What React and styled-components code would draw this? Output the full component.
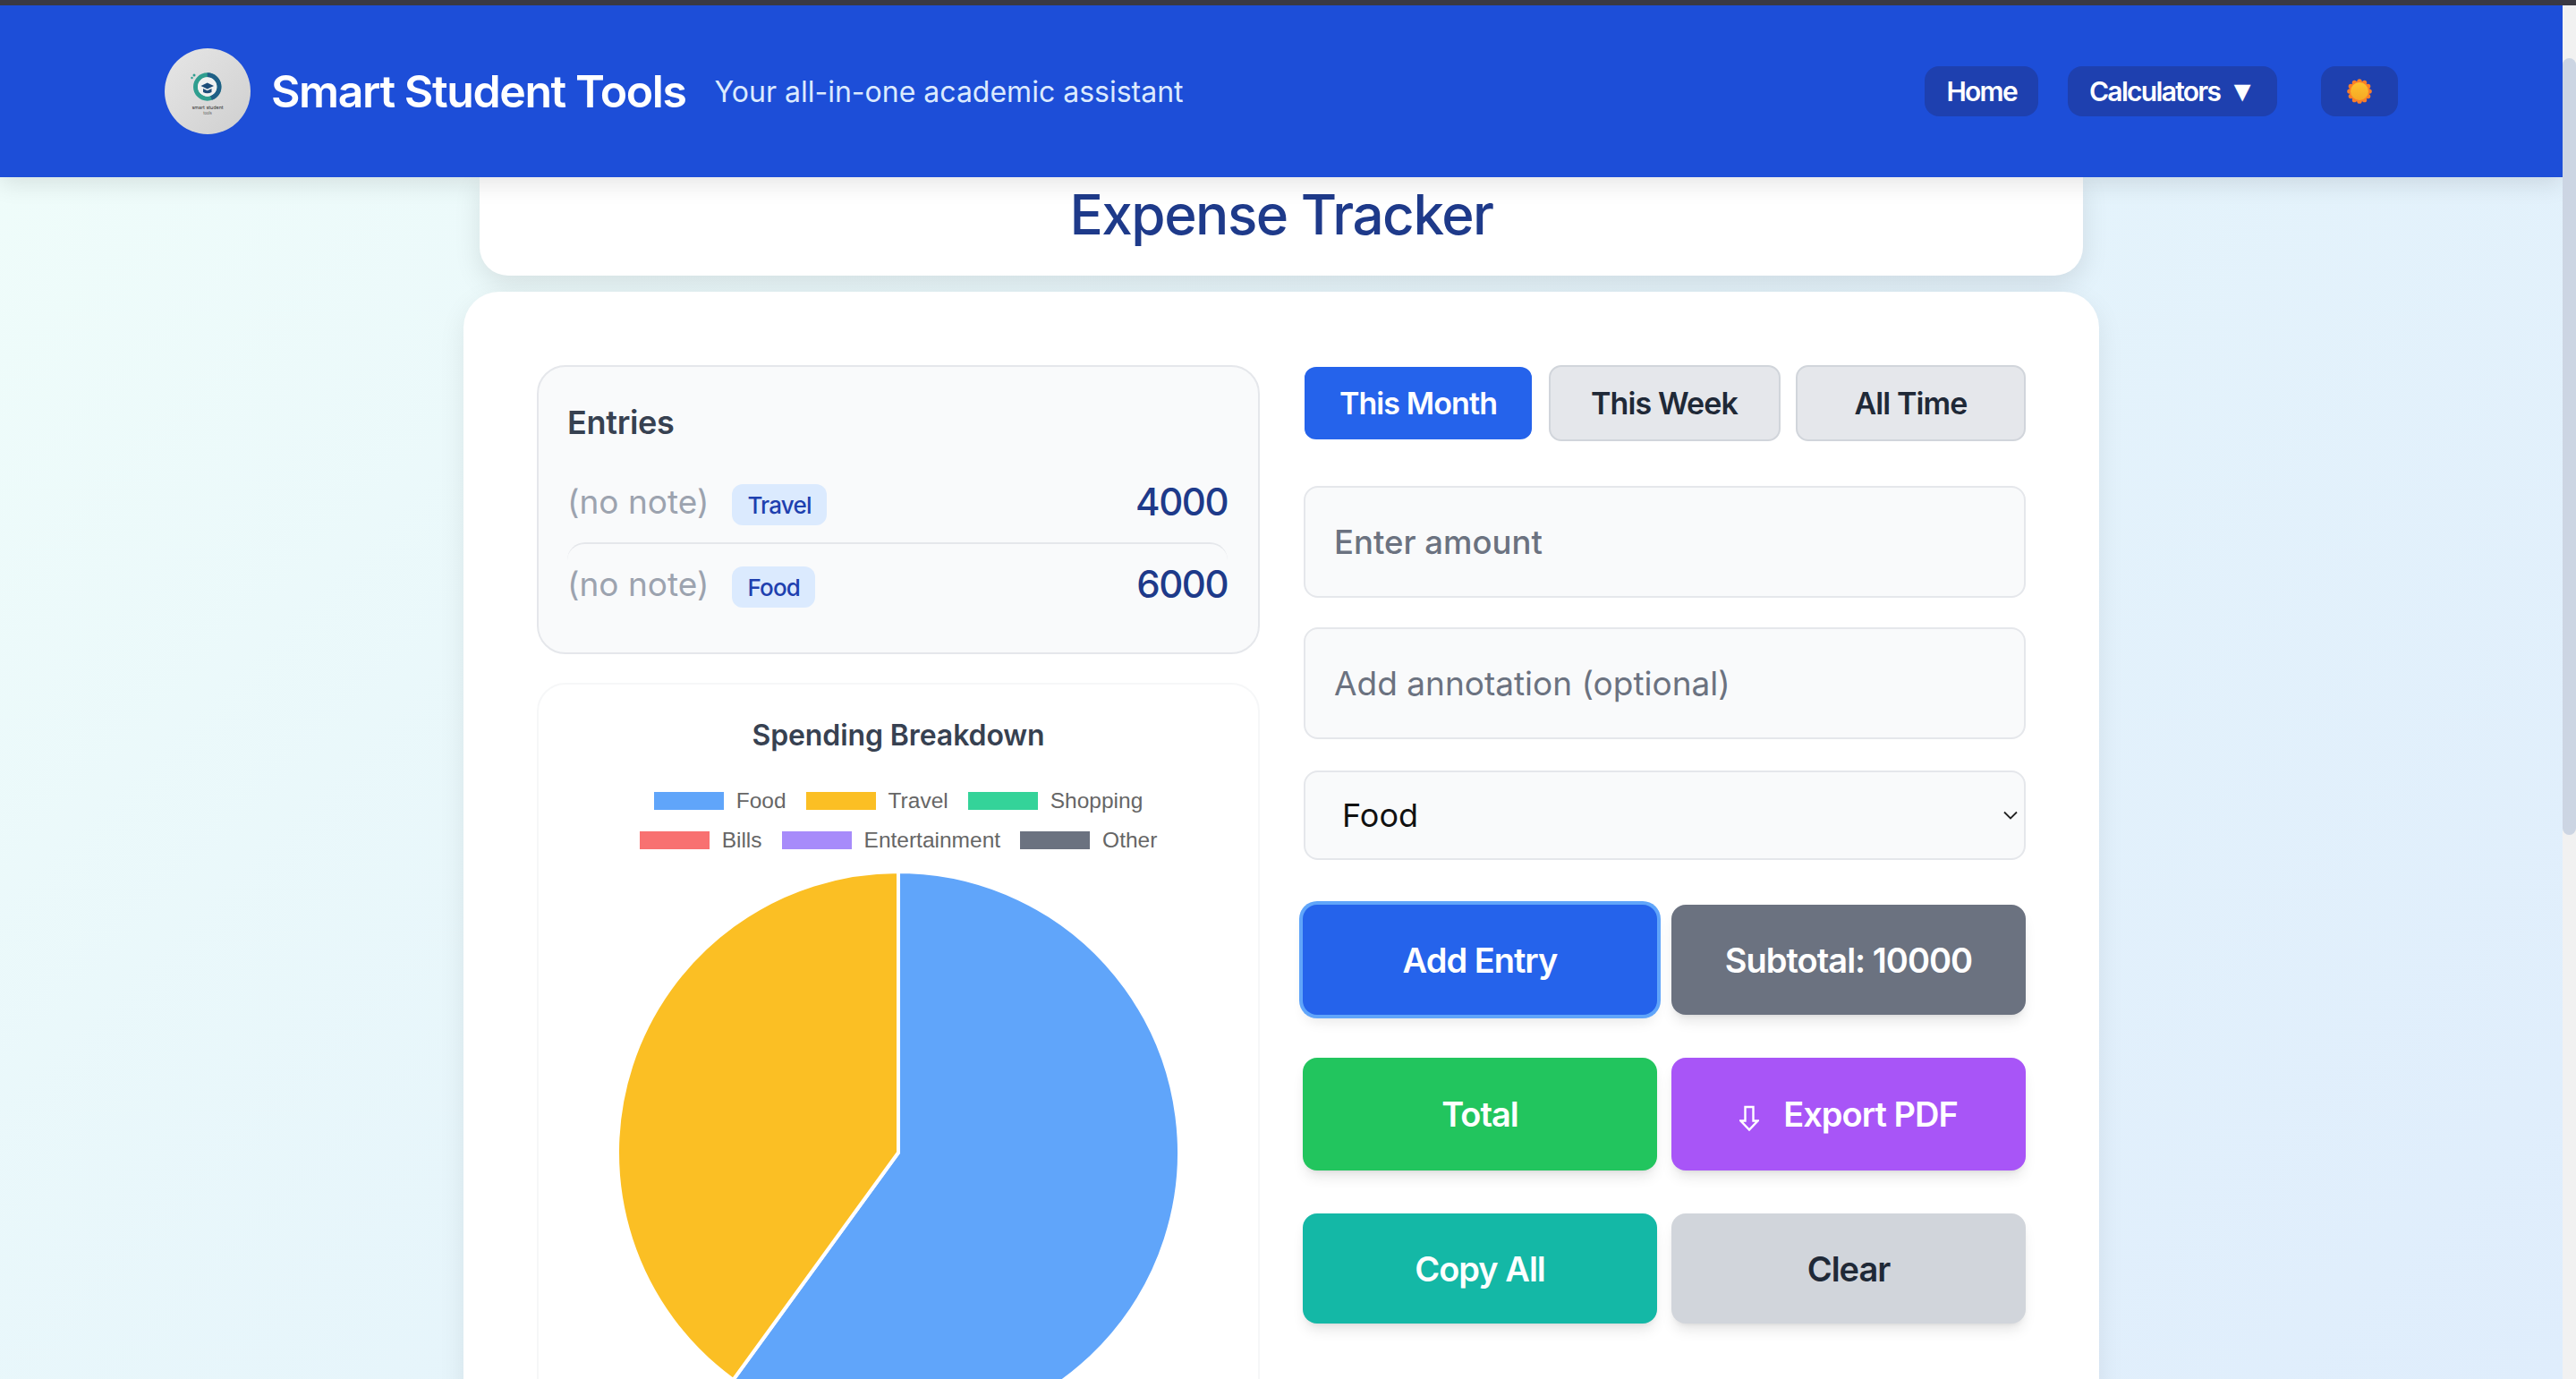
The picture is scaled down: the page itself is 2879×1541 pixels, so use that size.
import React from 'react';
import styled, { createGlobalStyle } from 'styled-components';

const Global = createGlobalStyle`
  html, body { margin: 0; padding: 0; height: 100%; overflow: hidden; }
  body { font-family: Inter, "Noto Sans", sans-serif; }
  * { box-sizing: border-box; }
`;

const Page = styled.div`
  width: 2879px; height: 1541px; display: flex; flex-direction: column; overflow: hidden;
`;
const TopStrip = styled.div`
  height: 6px; flex: none; background: #3a3942;
`;
const Frame = styled.div`
  flex: 1; min-height: 0; display: flex;
`;
const Viewport = styled.div`
  flex: 1; min-width: 0; display: flex; flex-direction: column; overflow: hidden;
  background: linear-gradient(135deg, #f0fdfa 0%, #e5f4fb 50%, #dfedfc 100%);
`;
const ScrollTrack = styled.div`
  width: 15px; flex: none; background: #f1f1f1; padding-top: 59px;
`;
const ScrollThumb = styled.div`
  height: 868px; background: #ccd5e3; border-radius: 8px;
`;
const Header = styled.header`
  position: relative; z-index: 2; flex: none; height: 192px; padding: 0 184px;
  background: #1d4ed8; display: flex; align-items: center; justify-content: space-between;
  box-shadow: 0 8px 24px rgba(0,0,0,.1);
`;
const Brand = styled.div`display: flex; align-items: center;`;
const LogoDisc = styled.div`
  width: 96px; height: 96px; border-radius: 50%; flex: none; margin-right: 23px;
  background: linear-gradient(135deg, #e6e6e6, #cfcfcf);
  display: flex; align-items: center; justify-content: center;
`;
const BrandTitle = styled.h1`
  margin: 0 32px 0 0; font-size: 50px; font-weight: 600; color: #fff; letter-spacing: -1.4px; white-space: nowrap;
`;
const Tagline = styled.span`
  font-size: 32px; font-weight: 400; color: #dbeafe; white-space: nowrap;
`;
const Nav = styled.nav`display: flex; align-items: center;`;
const NavButton = styled.button`
  height: 56px; padding: 0 ${p => p.$pad || 24}px; margin-left: ${p => p.$gap || 0}px; border: 0; border-radius: 16px;
  background: #1e40af; color: #fff; font: 600 30px Inter, sans-serif; letter-spacing: -1.7px;
  display: flex; align-items: center; white-space: nowrap;
`;
const Caret = styled.span`
  font: 32px "Liberation Sans", Arial, sans-serif; margin: 0 -1px 0 9px; letter-spacing: 0;
`;
const TitleCard = styled.div`
  flex: none; width: 1792px; height: 110px; margin: 0 auto; background: #fff;
  border-radius: 0 0 32px 32px; box-shadow: 0 10px 30px rgba(0,0,0,.1);
  display: flex; align-items: flex-start; justify-content: center;
`;
const PageTitle = styled.h2`
  margin: 12px 0 0; font-size: 62px; line-height: 60px; font-weight: 500; color: #1e3a8a; letter-spacing: -1.5px;
`;
const MainCard = styled.main`
  flex: none; width: 1828px; margin: 18px auto 0; padding: 82px 82px 80px; background: #fff;
  border-radius: 40px; box-shadow: 0 10px 30px rgba(0,0,0,.08);
  display: grid; grid-template-columns: 808px 807px; column-gap: 49px; align-items: start;
`;
const LeftCol = styled.div`display: flex; flex-direction: column; gap: 32px;`;
const EntriesPanel = styled.section`
  height: 323px; padding: 40px 34px 0 32px; background: #f9fafb; border: 2px solid #e5e7eb; border-radius: 32px;
`;
const PanelTitle = styled.h3`
  margin: 0 0 20px; font-size: 36px; line-height: 44px; font-weight: 600; color: #374151; letter-spacing: -0.3px;
`;
const EntryRow = styled.div`
  height: ${p => p.$h}px; display: flex; align-items: center; justify-content: space-between;
  ${p => p.$divided ? 'border-top: 2px solid #e5e7eb; border-radius: 20px 20px 0 0;' : ''}
`;
const EntryLeft = styled.div`display: flex; align-items: center; gap: 26px;`;
const Note = styled.span`font-size: 37px; color: #9ca3af;`;
const Badge = styled.span`
  height: 46px; padding: 0 17px; display: flex; align-items: center; border-radius: 12px; margin-top: 8px;
  background: #dbeafe; color: #1e40af; font-size: 26px; font-weight: 500; letter-spacing: -0.8px;
`;
const Amount = styled.span`font-size: 42px; font-weight: 500; color: #1e3a8a; letter-spacing: -1.5px;`;
const ChartPanel = styled.section`
  padding: 38px 34px 40px; background: #fff; border: 2px solid #f6f7f8; border-radius: 32px;
  display: flex; flex-direction: column; align-items: center;
`;
const ChartTitle = styled.h3`
  margin: 0 0 32px; font-size: 32px; line-height: 38px; font-weight: 600; color: #374151; letter-spacing: -0.1px;
`;
const LegendRow = styled.div`
  display: flex; gap: 22px; height: 44px; align-items: center; justify-content: center;
`;
const LegendItem = styled.div`
  display: flex; align-items: center; gap: 14px; font: 24.5px "Liberation Sans", Arial, sans-serif; color: #666;
`;
const Swatch = styled.i`
  display: block; width: 78px; height: 20px; background: ${p => p.$c};
`;
const PieSvg = styled.svg`display: block; margin-top: 12px; width: 630px; height: 630px; flex: none;`;

const RightCol = styled.div`display: flex; flex-direction: column;`;
const Tabs = styled.div`display: grid; grid-template-columns: 256px 259px 257px; column-gap: 17.5px; margin-bottom: 50px;`;
const Tab = styled.button`
  height: 85px; border-radius: 14px; font: 600 34px Inter, sans-serif; letter-spacing: -0.9px;
  border-style: solid; border-width: ${p => p.$active ? '2px 1px' : '2px'};
  border-color: ${p => p.$active ? '#fff' : '#d1d5db'};
  background: ${p => p.$active ? '#2563eb' : '#e5e7eb'};
  color: ${p => p.$active ? '#fff' : '#1f2937'};
`;
const Field = styled.input`
  width: 100%; height: 125px; padding: 0 32px; margin-bottom: 33px; background: #f9fafb;
  border: 2px solid #e5e7eb; border-radius: 16px; font: ${p => p.$w || 400} ${p => p.$s || 37}px Inter, sans-serif; outline: 0;
  &::placeholder { color: #6b7280; opacity: 1; }
`;
const PickerWrap = styled.div`
  position: relative; height: 100px; margin: 2px 0 50px;
`;
const Picker = styled.select`
  appearance: none; width: 100%; height: 100%; padding: 0 40px 0 41px; background: #f9fafb; color: #111;
  border: 2px solid #e5e7eb; border-radius: 16px; font: 400 36px Inter, sans-serif; outline: 0;
`;
const Chevron = styled.svg`
  position: absolute; right: 8px; top: 45px; width: 18px; height: 10px; pointer-events: none;
`;
const Actions = styled.div`
  display: grid; grid-template-columns: 396px 396px; column-gap: 16px; row-gap: 48px;
  grid-template-rows: 123px 126px 123px; justify-content: end;
`;
const ActionButton = styled.button`
  border: 0; border-radius: 16px; background: ${p => p.$bg}; color: ${p => p.$fg || '#fff'};
  font: 600 38px Inter, sans-serif; letter-spacing: -1px; display: flex; align-items: center; justify-content: center; gap: 27px;
  box-shadow: ${p => p.$ring ? '0 0 0 4px #60a5fa, ' : ''}0 10px 15px -3px rgba(0,0,0,.1), 0 4px 6px -4px rgba(0,0,0,.1);
`;
const ArrowIcon = styled.svg`
  width: 22px; height: 30px; margin-top: 10px; flex: none;
`;

const Sun = () => {
  const bumps = Array.from({ length: 12 }, (_, i) => {
    const a = (i * Math.PI) / 6;
    return <circle key={i} cx={14 + 11.2 * Math.cos(a)} cy={14 + 11.2 * Math.sin(a)} r="2.6" fill="#f97e2a" />;
  });
  return (
    <svg width="28" height="28" viewBox="0 0 28 28" aria-hidden="true">
      <defs>
        <linearGradient id="sunFill" x1="0" y1="0" x2="0" y2="1">
          <stop offset="0" stopColor="#fdc22e" />
          <stop offset="1" stopColor="#f6a824" />
        </linearGradient>
      </defs>
      {bumps}
      <circle cx="14" cy="14" r="11.5" fill="#f97e2a" />
      <circle cx="14" cy="14" r="10" fill="url(#sunFill)" />
    </svg>
  );
};

const Logo = () => (
  <svg width="96" height="96" viewBox="0 0 96 96" aria-hidden="true">
    <circle cx="47.7" cy="43" r="13.2" fill="none" stroke="#2f9e8f" strokeWidth="5" />
    <path d="M47.7 29.8 A13.2 13.2 0 0 1 52 55.5" fill="none" stroke="#1f5f86" strokeWidth="5" />
    <circle cx="47.7" cy="43" r="10.7" fill="#f1f1f1" />
    <path d="M40.5 42 L47.7 38.5 L55 42 L47.7 45.5 Z" fill="#1f4e79" />
    <path d="M43 45 L43 49 Q47.7 51.5 52.5 49 L52.5 45 L47.7 47.2 Z" fill="#1f4e79" />
    <circle cx="33" cy="30" r="1.5" fill="#2f9e8f" />
    <circle cx="30.5" cy="33" r="1.2" fill="#2f9e8f" />
    <text x="48" y="67.5" textAnchor="middle" fontFamily="Inter, sans-serif" fontSize="5.4" fill="#333">smart student</text>
    <text x="48" y="73.5" textAnchor="middle" fontFamily="Inter, sans-serif" fontSize="4.2" fill="#555">tools</text>
  </svg>
);

const DownArrow = () => (
  <ArrowIcon viewBox="0 0 22 30" fill="none" stroke="#fff" strokeWidth="2.4" aria-hidden="true">
    <path d="M6.5 2 H15.5 V17.5 H20.5 L11 27.5 L1.5 17.5 H6.5 Z" />
  </ArrowIcon>
);

const Pie = () => {
  const r = 314, c = 315;
  const a = (216 * Math.PI) / 180;
  const ex = c + r * Math.sin(a), ey = c - r * Math.cos(a);
  return (
    <PieSvg viewBox="0 0 630 630" aria-hidden="true">
      <path d={`M${c} ${c} L${c} ${c - r} A${r} ${r} 0 1 1 ${ex} ${ey} Z`} fill="#60a5fa" stroke="#fff" strokeWidth="4" strokeLinejoin="round" />
      <path d={`M${c} ${c} L${ex} ${ey} A${r} ${r} 0 0 1 ${c} ${c - r} Z`} fill="#fbbf24" stroke="#fff" strokeWidth="4" strokeLinejoin="round" />
    </PieSvg>
  );
};

const legend = [
  [['Food', '#60a5fa'], ['Travel', '#fbbf24'], ['Shopping', '#34d399']],
  [['Bills', '#f87171'], ['Entertainment', '#a78bfa'], ['Other', '#6b7280']],
];

export default function App() {
  return (
    <Page>
      <Global />
      <TopStrip />
      <Frame>
        <Viewport>
          <Header>
            <Brand>
              <LogoDisc><Logo /></LogoDisc>
              <BrandTitle>Smart Student Tools</BrandTitle>
              <Tagline>Your all-in-one academic assistant</Tagline>
            </Brand>
            <Nav>
              <NavButton>Home</NavButton>
              <NavButton $gap={33}>Calculators<Caret>▼</Caret></NavButton>
              <NavButton $gap={49} $pad={29}><Sun /></NavButton>
            </Nav>
          </Header>
          <TitleCard><PageTitle>Expense Tracker</PageTitle></TitleCard>
          <MainCard>
            <LeftCol>
              <EntriesPanel>
                <PanelTitle>Entries</PanelTitle>
                <EntryRow $h={92}>
                  <EntryLeft><Note>(no note)</Note><Badge>Travel</Badge></EntryLeft>
                  <Amount>4000</Amount>
                </EntryRow>
                <EntryRow $h={90} $divided>
                  <EntryLeft><Note>(no note)</Note><Badge>Food</Badge></EntryLeft>
                  <Amount>6000</Amount>
                </EntryRow>
              </EntriesPanel>
              <ChartPanel>
                <ChartTitle>Spending Breakdown</ChartTitle>
                {legend.map((row, i) => (
                  <LegendRow key={i}>
                    {row.map(([label, color]) => (
                      <LegendItem key={label}><Swatch $c={color} />{label}</LegendItem>
                    ))}
                  </LegendRow>
                ))}
                <Pie />
              </ChartPanel>
            </LeftCol>
            <RightCol>
              <Tabs>
                <Tab $active>This Month</Tab>
                <Tab>This Week</Tab>
                <Tab>All Time</Tab>
              </Tabs>
              <Field $w={500} $s={36.5} placeholder="Enter amount" />
              <Field placeholder="Add annotation (optional)" />
              <PickerWrap>
                <Picker defaultValue="Food">
                  <option>Food</option>
                  <option>Travel</option>
                  <option>Shopping</option>
                  <option>Bills</option>
                  <option>Entertainment</option>
                  <option>Other</option>
                </Picker>
                <Chevron viewBox="0 0 18 10" fill="none" stroke="#222" strokeWidth="1.8" aria-hidden="true">
                  <path d="M2 1.5 L9 8.5 L16 1.5" />
                </Chevron>
              </PickerWrap>
              <Actions>
                <ActionButton $bg="#2563eb" $ring>Add Entry</ActionButton>
                <ActionButton $bg="#6b7280">Subtotal: 10000</ActionButton>
                <ActionButton $bg="#22c55e">Total</ActionButton>
                <ActionButton $bg="#a855f7"><DownArrow />Export PDF</ActionButton>
                <ActionButton $bg="#14b8a6">Copy All</ActionButton>
                <ActionButton $bg="#d1d5db" $fg="#1f2937">Clear</ActionButton>
              </Actions>
            </RightCol>
          </MainCard>
        </Viewport>
        <ScrollTrack><ScrollThumb /></ScrollTrack>
      </Frame>
    </Page>
  );
}
